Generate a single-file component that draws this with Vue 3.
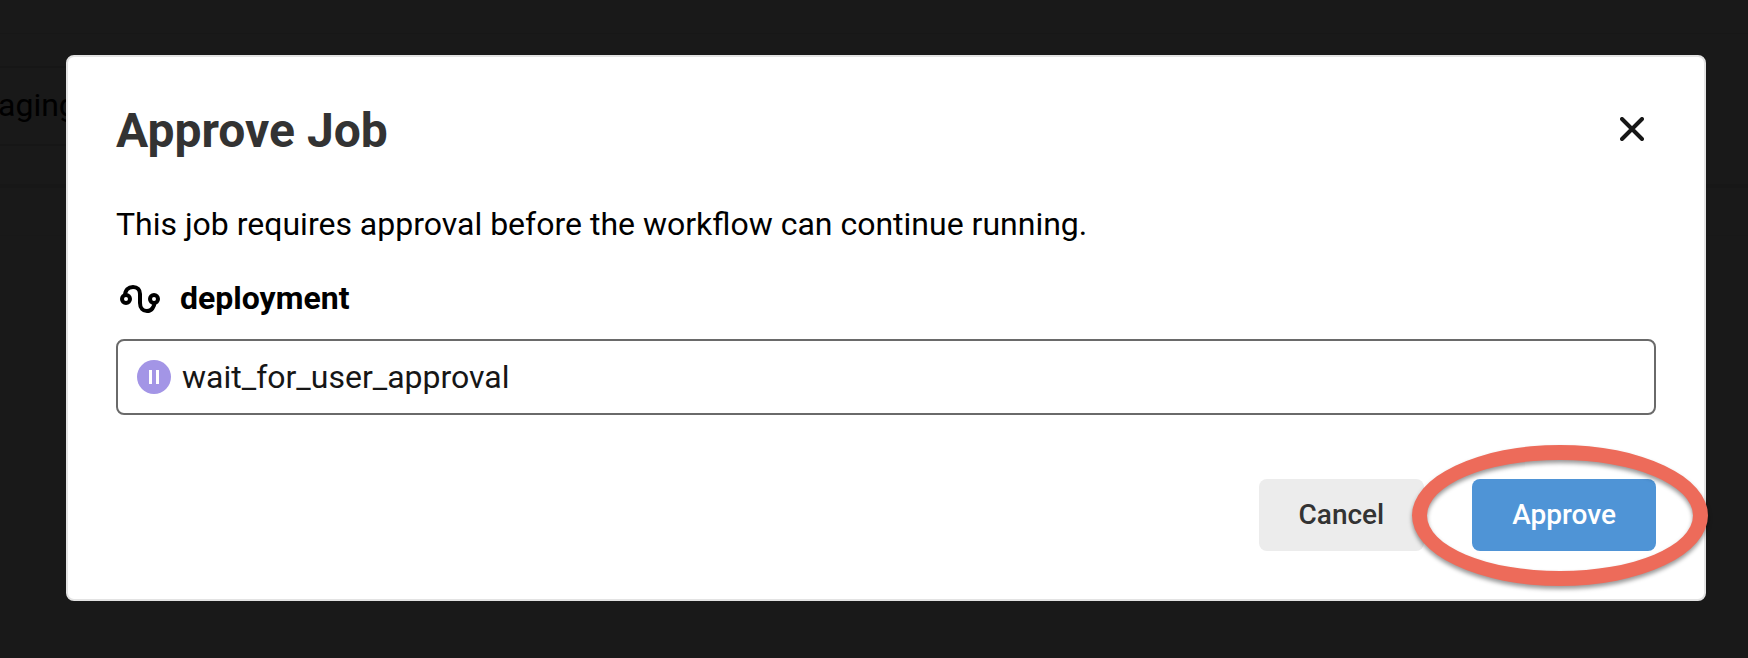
<script setup>
import { ref } from 'vue'
const job = ref('wait_for_user_approval')
</script>

<template>
  <div class="page">
    <div class="backdrop" aria-hidden="true">
      <div class="strip head"></div>
      <div class="card">aging</div>
      <div class="strip band"></div>
    </div>
    <main class="modal" role="dialog" aria-modal="true" aria-labelledby="title">
      <header class="top">
        <h1 id="title">Approve Job</h1>
        <button class="close" type="button" aria-label="Close">
          <svg width="24" height="24" viewBox="0 0 24 24" fill="none" stroke="#161616" stroke-width="4" stroke-linecap="round">
            <path d="M2 2 22 22M22 2 2 22" />
          </svg>
        </button>
      </header>
      <p class="message">This job requires approval before the workflow can continue running.</p>
      <label class="workflow" for="job">
        <svg width="48" height="32" viewBox="0 0 48 32" fill="none" stroke="#000" stroke-width="4">
          <circle cx="10" cy="17" r="4" />
          <circle cx="38" cy="17" r="4" />
          <path d="M9 14C9 8 12.500 5 17 5C21.500 5 24 8 24 12V21C24 26 27 29 31 29C35.500 29 38.500 25 38.500 20" />
        </svg>
        <span>deployment</span>
      </label>
      <div class="field">
        <svg width="34" height="34" viewBox="0 0 34 34">
          <circle cx="17" cy="17" r="17" fill="#a395e6" />
          <path d="M12 10h3v14h-3zM19 10h3v14h-3z" fill="#fff" />
        </svg>
        <input id="job" v-model="job" type="text" readonly />
      </div>
      <footer class="actions">
        <button class="btn cancel" type="button">Cancel</button>
        <div class="marked">
          <button class="btn approve" type="button">Approve</button>
          <span class="ring"></span>
        </div>
      </footer>
    </main>
  </div>
</template>

<style>
body {
  background: #191919;
}
</style>

<style scoped>
* {
  box-sizing: border-box;
}
.page {
  position: relative;
  min-height: 100vh;
  padding: 55px 42px 56px 66px;
  overflow: hidden;
  background: #191919;
  font-family: Roboto, "Liberation Sans", sans-serif;
  font-size: 32px;
  line-height: 40px;
  color: #000;
}
.backdrop {
  position: absolute;
  inset: 0;
}
.strip {
  border-bottom: 1px solid #171717;
}
.head {
  height: 34px;
}
.card {
  height: 80px;
  margin: 32px 66px 38px -4px;
  padding-top: 17px;
  border: 2px solid #161616;
}
.band {
  height: 52px;
  border-top: 4px solid #171717;
  border-bottom-color: #181818;
}
.modal {
  position: relative;
  padding: 48px;
  background: #fff;
  border: 2px solid #e3e3e3;
  border-radius: 8px;
}
.top {
  display: flex;
  align-items: flex-start;
  justify-content: space-between;
}
h1 {
  margin: 0;
  font-size: 48px;
  line-height: 52px;
  font-weight: 700;
  color: #333;
}
button {
  font: inherit;
  border: 0;
  cursor: pointer;
}
.close {
  display: flex;
  padding: 12px;
  background: none;
}
svg {
  flex: none;
  display: block;
}
.message {
  margin: 47px 0 0;
}
.workflow {
  display: flex;
  align-items: center;
  gap: 16px;
  margin-top: 34px;
  font-weight: 700;
}
.field {
  display: flex;
  align-items: center;
  gap: 11px;
  margin-top: 21px;
  padding: 16px 19px;
  border: 2px solid #6a6a6a;
  border-radius: 8px;
}
input {
  flex: 1;
  min-width: 0;
  height: 40px;
  padding: 0;
  border: 0;
  outline: 0;
  background: none;
  font: inherit;
  color: #161616;
}
.actions {
  display: flex;
  justify-content: flex-end;
  gap: 48px;
  margin-top: 64px;
}
.btn {
  height: 72px;
  padding: 0 40px;
  border-radius: 8px;
  font-size: 28px;
  font-weight: 500;
}
.cancel {
  background: #ececec;
  color: #333;
}
.marked {
  position: relative;
}
.approve {
  display: block;
  background: #4f94d6;
  color: #fff;
}
.ring {
  position: absolute;
  inset: -34px -52px -35px -60px;
  border: 15px solid #ed6b5a;
  border-radius: 50%;
  filter: drop-shadow(0 3px 2px rgba(0, 0, 0, 0.4));
  pointer-events: none;
}
</style>
